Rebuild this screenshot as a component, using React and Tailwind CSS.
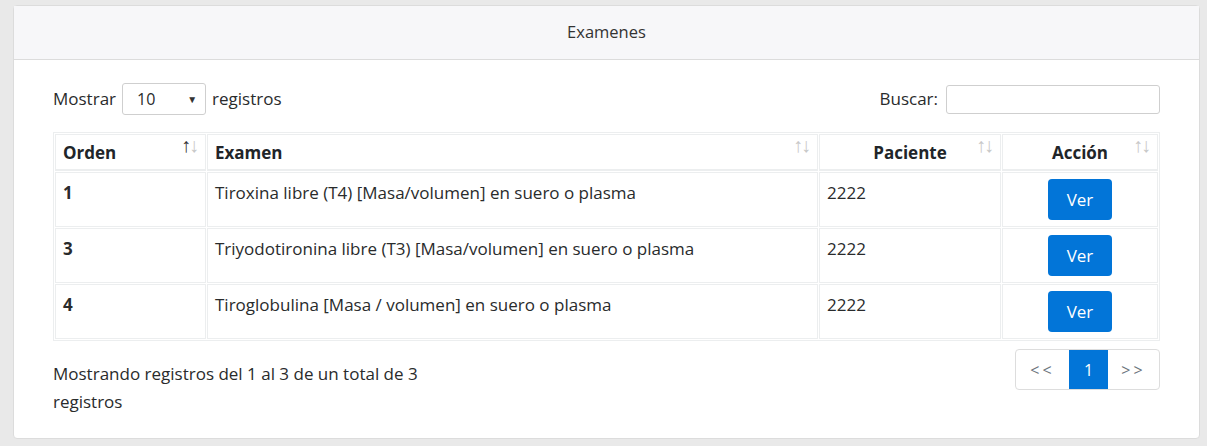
import React from 'react';

const examenes = [
  { orden: 1, examen: 'Tiroxina libre (T4) [Masa/volumen] en suero o plasma', paciente: '2222' },
  { orden: 3, examen: 'Triyodotironina libre (T3) [Masa/volumen] en suero o plasma', paciente: '2222' },
  { orden: 4, examen: 'Tiroglobulina [Masa / volumen] en suero o plasma', paciente: '2222' },
];

function SortIcon({ active }) {
  return (
    <span className="absolute right-[8px] top-[1px] text-[20px] leading-[18px] tracking-[-2px] font-normal">
      <span className={active ? 'text-[#333]' : 'text-[#c8c8c8]'}>↑</span>
      <span className="text-[#c8c8c8]">↓</span>
    </span>
  );
}

export default function App() {
  return (
    <div className="min-h-[446px] bg-[#e9e9e9] pl-[13px] pr-[7px] pt-[5px] pb-2 text-[17px] text-[#292b2c]" style={{ fontFamily: '"Open Sans", "Noto Sans", sans-serif' }}>
      <div className="rounded-[4px] border border-[#dcdcdc] bg-white">
        <div className="flex h-[54px] items-center justify-center border-b border-[#dcdcdc] bg-[#f7f7f9] text-[16.5px] text-[#333]">
          Examenes
        </div>

        <div className="px-[39px] pt-[23px] pb-[22px]">
          <div className="flex items-center justify-between">
            <div className="flex items-center gap-[6px]">
              <span>Mostrar</span>
              <div className="flex h-[32px] w-[84px] items-center justify-between rounded-[3px] border border-[#cfcfcf] pl-[14px] pr-[8px] text-[16px]">
                <span>10</span>
                <span className="text-[10px] text-[#333]">▼</span>
              </div>
              <span>registros</span>
            </div>
            <div className="flex items-center gap-[8px]">
              <span>Buscar:</span>
              <input className="h-[29px] w-[214px] rounded-[3px] border border-[#cfcfcf] outline-none" />
            </div>
          </div>

          <table className="mt-[17px] w-full table-fixed border-separate border-spacing-[1px] border border-[#eceeef]">
            <colgroup>
              <col className="w-[151px]" />
              <col className="w-[611px]" />
              <col className="w-[182px]" />
              <col />
            </colgroup>
            <thead>
              <tr className="font-bold text-[#212529]">
                <th className="relative h-[37px] border border-b-2 border-[#eceeef] px-[7px] pt-[2px] text-left align-middle">
                  Orden
                  <SortIcon active />
                </th>
                <th className="relative h-[37px] border border-b-2 border-[#eceeef] px-[7px] pt-[2px] text-left align-middle">
                  Examen
                  <SortIcon />
                </th>
                <th className="relative h-[37px] border border-b-2 border-[#eceeef] px-[7px] pt-[2px] text-center align-middle">
                  Paciente
                  <SortIcon />
                </th>
                <th className="relative h-[37px] border border-b-2 border-[#eceeef] px-[7px] pt-[2px] text-center align-middle">
                  Acción
                  <SortIcon />
                </th>
              </tr>
            </thead>
            <tbody>
              {examenes.map((e) => (
                <tr key={e.orden}>
                  <td className="border border-[#eceeef] px-[7px] py-[6px] align-top font-bold leading-[28px]">{e.orden}</td>
                  <td className="border border-[#eceeef] px-[7px] py-[6px] align-top leading-[28px]">{e.examen}</td>
                  <td className="border border-[#eceeef] px-[7px] py-[6px] align-top leading-[28px]">{e.paciente}</td>
                  <td className="border border-[#eceeef] px-[7px] py-[6px] text-center align-top">
                    <button className="h-[41px] w-[64px] rounded-[4px] bg-[#0275d8] text-white">Ver</button>
                  </td>
                </tr>
              ))}
            </tbody>
          </table>

          <div className="mt-[8px] flex items-start justify-between">
            <div className="w-[425px] pt-[11px] leading-[28px]">
              Mostrando registros del 1 al 3 de un total de 3 registros
            </div>
            <div className="flex h-[41px] overflow-hidden rounded-[4px] border border-[#dddddd] text-[16px]">
              <span className="flex w-[53px] items-center justify-center tracking-[3px] text-[#6c757d]">&lt;&lt;</span>
              <span className="flex w-[39px] items-center justify-center bg-[#0275d8] text-white">1</span>
              <span className="flex w-[51px] items-center justify-center tracking-[3px] text-[#6c757d]">&gt;&gt;</span>
            </div>
          </div>
        </div>
      </div>
    </div>
  );
}
